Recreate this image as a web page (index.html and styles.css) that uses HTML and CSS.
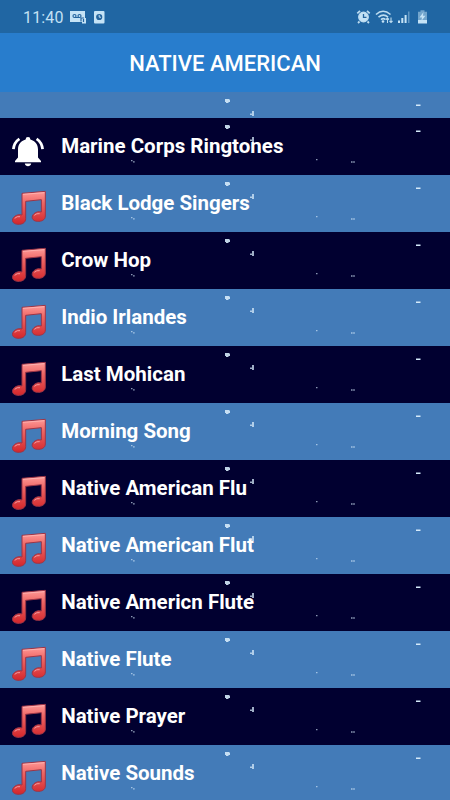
FILE: index.html
```html
<!DOCTYPE html>
<html lang="en">
<head>
<meta charset="utf-8">
<title>Native American</title>
<link rel="stylesheet" href="styles.css">
</head>
<body>
<svg class="defs" aria-hidden="true">
  <defs>
    <linearGradient id="red" x1="0" y1="0" x2="0" y2="1">
      <stop offset="0" stop-color="#ff9a98"/>
      <stop offset=".35" stop-color="#ee6664"/>
      <stop offset="1" stop-color="#d3262b"/>
    </linearGradient>
    <symbol id="note" viewBox="36 30 108 108">
      <path d="M66 40 136 34V108C136 120 124 125 112 124C96 123 92 110 102 101C109 95 117 94 124 96V59L77 64V116C77 128 66 134 54 133C36 132 33 119 43 110C50 104 58 103 66 105z" fill="url(#red)" stroke="#9c3547" stroke-width="3" stroke-linejoin="round"/>
      <path d="M44 115q7-7 16-5M103 106q7-7 16-5" fill="none" stroke="#f39a9c" stroke-width="3"/>
      <path d="M69 43 133 38" stroke="#ffc0bd" stroke-width="2"/>
    </symbol>
    <symbol id="bell" viewBox="0 0 32 32">
      <g fill="#fff">
        <path d="M13.600 3.400a2.400 2.400 0 0 1 4.800 0c5 1.400 7.600 5 7.600 10v8l3 3.500v1.400H3V24.900l3-3.500v-8c0-5 2.600-8.600 7.600-10z"/>
        <path d="M12.800 27.600h6.400c-.5 3.600-5.900 3.600-6.400 0z"/>
      </g>
      <path d="M7.400 2.800Q2 6.400 1.400 13.200M24.600 2.800Q30 6.400 30.600 13.200" fill="none" stroke="#fff" stroke-width="2.700"/>
    </symbol>
    <symbol id="specks" viewBox="0 0 450 57">
      <g fill="#d5eafa">
        <path d="M225 7h4l1 1v2h-1l-1 1h-2v-1h-1z" opacity=".9"/>
        <path d="M252 19h2v5h-2v-1h-2v-1.500h2z" opacity=".75"/>
        <path d="M416 12.500h4.500V14H416z"/>
        <path d="M316 41h1.500v1.300H316zM351 43.300h1.600v1.400H351zM353.200 43.300h1.600v1.400h-1.600zM131 42h1.500v1.200H131zM133 43.300h1.700v1.200H133z" opacity=".65"/>
      </g>
    </symbol>
  </defs>
</svg>
<div class="screen">
  <header class="status">
    <span class="time">11:40</span>
    <svg class="status-left" width="36" height="14" viewBox="0 0 36 14">
      <path d="M0 1h15v7h1v5.500h-4V12H0z" fill="#c5e3f6"/>
      <g fill="none" stroke="#24659f" stroke-width="1.200"><circle cx="4.500" cy="6" r="1.500"/><circle cx="9.500" cy="6" r="1.500"/><path d="M4.500 7.500h5M11 11.500V8h3M13.500 9v3"/></g>
      <rect x="24" y="1" width="10.500" height="12.500" rx="1" fill="#c5e3f6"/>
      <circle cx="29.200" cy="7" r="3.100" fill="#24659f"/>
      <path d="M29.200 5v2.200H31" fill="none" stroke="#c5e3f6"/>
    </svg>
    <svg class="status-right" width="76" height="16" viewBox="0 0 76 16">
      <g fill="none" stroke="#bddcf0">
        <circle cx="7.500" cy="8" r="4.700" fill="#c5e3f6" stroke-width="1.500"/>
        <path d="M1.300 4.300 4 1.800M13.700 4.300 11 1.800M3.500 12.500 2 14M11.500 12.500 13 14" stroke-width="1.800"/>
        <path d="M7.500 5v3.300h3" stroke="#24659f" stroke-width="1.300"/>
        <path d="M20 5.500q7-6.500 14.500 0M22.500 8.200q5-4.200 9.500 0M25 10.700q2.300-2 4.500 0" stroke-width="1.600"/>
        <path d="M31.500 14V9M30 10.500 31.500 9l1.500 1.500M35 8.500v5M33.500 12l1.500 1.500 1.500-1.500" stroke-width="1.100"/>
      </g>
      <g fill="#c5e3f6">
        <circle cx="27" cy="12.500" r="1.300"/>
        <path d="M42 11.500h2V14h-2zM45.300 9h2v5h-2zM48.600 6h2v8h-2z"/>
        <path d="M52 2.500h1.500V14H52z" opacity=".4"/>
        <path d="M64.500 1.300h4v1.500h2.500v8.500h-9V2.800h2.500z" opacity=".5"/>
        <path d="M62 11h9v3.500h-9z"/>
        <path d="m67.500 3-4 5.500H66L65.300 12l4.200-5.300h-2.600z"/>
      </g>
    </svg>
  </header>
  <div class="titlebar"><h1>NATIVE AMERICAN</h1></div>
  <ul class="list">
    <li class="row partial"><svg class="specks"><use href="#specks"/></svg></li>
    <li class="row"><svg class="bell"><use href="#bell"/></svg><span>Marine Corps Ringtones</span><svg class="specks"><use href="#specks"/></svg></li>
    <li class="row"><svg class="note"><use href="#note"/></svg><span>Black Lodge Singers</span><svg class="specks"><use href="#specks"/></svg></li>
    <li class="row"><svg class="note"><use href="#note"/></svg><span>Crow Hop</span><svg class="specks"><use href="#specks"/></svg></li>
    <li class="row"><svg class="note"><use href="#note"/></svg><span>Indio Irlandes</span><svg class="specks"><use href="#specks"/></svg></li>
    <li class="row"><svg class="note"><use href="#note"/></svg><span>Last Mohican</span><svg class="specks"><use href="#specks"/></svg></li>
    <li class="row"><svg class="note"><use href="#note"/></svg><span>Morning Song</span><svg class="specks"><use href="#specks"/></svg></li>
    <li class="row"><svg class="note"><use href="#note"/></svg><span>Native American Flu</span><svg class="specks"><use href="#specks"/></svg></li>
    <li class="row"><svg class="note"><use href="#note"/></svg><span>Native American Flut</span><svg class="specks"><use href="#specks"/></svg></li>
    <li class="row"><svg class="note"><use href="#note"/></svg><span>Native Americn Flute</span><svg class="specks"><use href="#specks"/></svg></li>
    <li class="row"><svg class="note"><use href="#note"/></svg><span>Native Flute</span><svg class="specks"><use href="#specks"/></svg></li>
    <li class="row"><svg class="note"><use href="#note"/></svg><span>Native Prayer</span><svg class="specks"><use href="#specks"/></svg></li>
    <li class="row"><svg class="note"><use href="#note"/></svg><span>Native Sounds</span><svg class="specks"><use href="#specks"/></svg></li>
  </ul>
</div>
</body>
</html>
```
FILE: styles.css
```css
* { box-sizing: border-box; }
body { margin: 0; font-family: Roboto, "Liberation Sans", sans-serif; color: #fff; }
.defs { position: absolute; width: 0; height: 0; }
.screen { width: 450px; height: 800px; overflow: hidden; display: flex; flex-direction: column; }
.status { flex: none; height: 33px; background: #2066a3; display: flex; align-items: center; padding: 1px 18px 0 23px; }
.time { font-size: 16px; width: 47px; color: #c3e1f4; letter-spacing: .15px; }
.status-right { margin-left: auto; }
.titlebar { flex: none; height: 59px; background: #287dcd; display: flex; align-items: center; justify-content: center; padding-top: 2px; }
.titlebar h1 { margin: 0; font-size: 22px; font-weight: 500; line-height: 26px; }
.list { list-style: none; margin: 0; padding: 0; }
.row { position: relative; height: 57px; display: flex; align-items: flex-start; padding-left: 12px; background: #437bb8; overflow: hidden; }
.row:nth-child(even) { background: #010030; }
.row.partial { height: 26px; }
.row span { font-size: 20.500px; font-weight: 700; line-height: 26px; margin-top: 15px; white-space: nowrap; }
.note { flex: none; width: 36px; height: 36px; margin: 15px 13.200px 0 0; }
.bell { flex: none; width: 32px; height: 32px; margin: 18px 17.200px 0 0; }
.specks { position: absolute; left: 0; top: 0; width: 450px; height: 57px; }
```
